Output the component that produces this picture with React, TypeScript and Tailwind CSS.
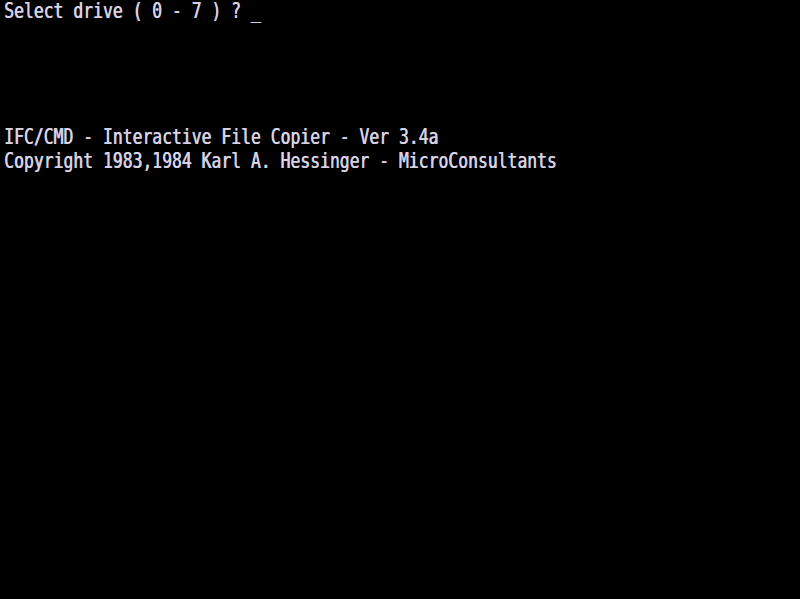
export default function App() {
  return (
    <div className="w-[800px] h-[599px] bg-black overflow-hidden">
      <div
        className="origin-top-left scale-y-[1.32] pl-[4px] pt-0 text-[16.4px] leading-[18.9px] text-[#d6d2e6] whitespace-pre [text-shadow:0.6px_0_0_#d6d2e6]"
        style={{ fontFamily: '"DejaVu Sans Mono", "Liberation Mono", monospace' }}
      >
        <div>Select drive ( 0 - 7 ) ? _</div>
        <div>&nbsp;</div>
        <div>&nbsp;</div>
        <div>&nbsp;</div>
        <div>&nbsp;</div>
        <div>IFC/CMD - Interactive File Copier - Ver 3.4a</div>
        <div>Copyright 1983,1984 Karl A. Hessinger - MicroConsultants</div>
      </div>
    </div>
  );
}
